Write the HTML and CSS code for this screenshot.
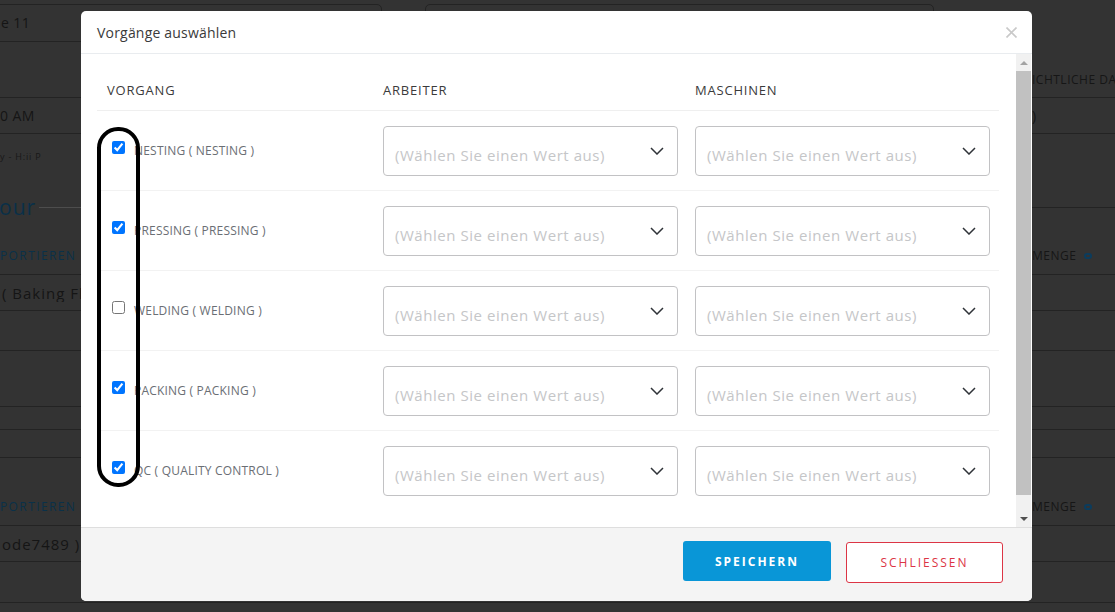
FILE: index.html
```html
<!DOCTYPE html>
<html lang="de">
<head>
<meta charset="utf-8">
<title>Vorgänge auswählen</title>
<link rel="stylesheet" href="styles.css">
</head>
<body>
<div class="page">
  <div class="bg">
    <div class="bg-fields">
      <div class="field field-a"><span class="txt">e 11</span></div>
      <div class="field field-b"></div>
    </div>
    <div class="bg-row r3 bottom"><span class="l"></span><span class="r cap">ICHTLICHE DAU</span></div>
    <div class="bg-row r4 mid"><span class="l txt">0 AM</span><span class="r txt">)</span></div>
    <div class="bg-row r5 noline"><span class="l small">y - H:ii P</span></div>
    <div class="bg-head"><span class="legend">our</span><span class="rule-light"></span><span class="rule"></span></div>
    <div class="bg-row r6 bottom"><span class="l cap blue">PORTIEREN A</span><span class="r cap">MENGE <i class="eye"></i></span></div>
    <div class="bg-row r7 mid"><span class="l txt wide">( Baking Fl</span><span class="r"></span></div>
    <div class="bg-row r8"></div>
    <div class="bg-row r9"></div>
    <div class="bg-row r10"></div>
    <div class="bg-row r11"></div>
    <div class="bg-row r12 bottom"><span class="l cap blue">PORTIEREN A</span><span class="r cap">MENGE <i class="eye"></i></span></div>
    <div class="bg-row r13 mid"><span class="l txt wide">ode7489 )</span><span class="r"></span></div>
    <div class="bg-row r14"></div>
  </div>

  <div class="modal">
    <div class="m-header">
      <span class="m-title">Vorgänge auswählen</span>
      <svg class="m-close" width="11" height="11" viewBox="0 0 11 11"><path d="M0.5 0.5 L10.5 10.5 M10.5 0.5 L0.5 10.5" stroke="#c9c9c9" stroke-width="1.6" fill="none"/></svg>
    </div>
    <div class="m-body">
      <div class="m-content">
        <div class="t-head">
          <div class="c1">Vorgang</div>
          <div class="c2">Arbeiter</div>
          <div class="c3">Maschinen</div>
        </div>

        <div class="t-row">
          <div class="c1"><input type="checkbox" checked><span class="op">Nesting ( Nesting )</span></div>
          <div class="c2"><div class="select"><span class="ph">(Wählen Sie einen Wert aus)</span><svg class="chev" width="14" height="8" viewBox="0 0 14 8"><path d="M1 1 L7 7 L13 1" stroke="#2f3338" stroke-width="1.5" fill="none"/></svg></div></div>
          <div class="c3"><div class="select"><span class="ph">(Wählen Sie einen Wert aus)</span><svg class="chev" width="14" height="8" viewBox="0 0 14 8"><path d="M1 1 L7 7 L13 1" stroke="#2f3338" stroke-width="1.5" fill="none"/></svg></div></div>
        </div>

        <div class="t-row">
          <div class="c1"><input type="checkbox" checked><span class="op">Pressing ( Pressing )</span></div>
          <div class="c2"><div class="select"><span class="ph">(Wählen Sie einen Wert aus)</span><svg class="chev" width="14" height="8" viewBox="0 0 14 8"><path d="M1 1 L7 7 L13 1" stroke="#2f3338" stroke-width="1.5" fill="none"/></svg></div></div>
          <div class="c3"><div class="select"><span class="ph">(Wählen Sie einen Wert aus)</span><svg class="chev" width="14" height="8" viewBox="0 0 14 8"><path d="M1 1 L7 7 L13 1" stroke="#2f3338" stroke-width="1.5" fill="none"/></svg></div></div>
        </div>

        <div class="t-row">
          <div class="c1"><input type="checkbox"><span class="op">Welding ( Welding )</span></div>
          <div class="c2"><div class="select"><span class="ph">(Wählen Sie einen Wert aus)</span><svg class="chev" width="14" height="8" viewBox="0 0 14 8"><path d="M1 1 L7 7 L13 1" stroke="#2f3338" stroke-width="1.5" fill="none"/></svg></div></div>
          <div class="c3"><div class="select"><span class="ph">(Wählen Sie einen Wert aus)</span><svg class="chev" width="14" height="8" viewBox="0 0 14 8"><path d="M1 1 L7 7 L13 1" stroke="#2f3338" stroke-width="1.5" fill="none"/></svg></div></div>
        </div>

        <div class="t-row">
          <div class="c1"><input type="checkbox" checked><span class="op">Packing ( Packing )</span></div>
          <div class="c2"><div class="select"><span class="ph">(Wählen Sie einen Wert aus)</span><svg class="chev" width="14" height="8" viewBox="0 0 14 8"><path d="M1 1 L7 7 L13 1" stroke="#2f3338" stroke-width="1.5" fill="none"/></svg></div></div>
          <div class="c3"><div class="select"><span class="ph">(Wählen Sie einen Wert aus)</span><svg class="chev" width="14" height="8" viewBox="0 0 14 8"><path d="M1 1 L7 7 L13 1" stroke="#2f3338" stroke-width="1.5" fill="none"/></svg></div></div>
        </div>

        <div class="t-row last">
          <div class="c1"><input type="checkbox" checked><span class="op">QC ( Quality Control )</span></div>
          <div class="c2"><div class="select"><span class="ph">(Wählen Sie einen Wert aus)</span><svg class="chev" width="14" height="8" viewBox="0 0 14 8"><path d="M1 1 L7 7 L13 1" stroke="#2f3338" stroke-width="1.5" fill="none"/></svg></div></div>
          <div class="c3"><div class="select"><span class="ph">(Wählen Sie einen Wert aus)</span><svg class="chev" width="14" height="8" viewBox="0 0 14 8"><path d="M1 1 L7 7 L13 1" stroke="#2f3338" stroke-width="1.5" fill="none"/></svg></div></div>
        </div>
      </div>
      <div class="scrollbar">
        <div class="sb-btn"><svg width="8" height="4" viewBox="0 0 8 4"><path d="M0 4 L4 0 L8 4 Z" fill="#a3a3a3"/></svg></div>
        <div class="sb-thumb"></div>
        <div class="sb-track"></div>
        <div class="sb-btn"><svg width="8" height="4" viewBox="0 0 8 4"><path d="M0 0 L8 0 L4 4 Z" fill="#505050"/></svg></div>
      </div>
    </div>
    <div class="m-footer">
      <button class="btn btn-save">SPEICHERN</button>
      <button class="btn btn-close">SCHLIESSEN</button>
    </div>
    <div class="highlight"></div>
  </div>
</div>
</body>
</html>
```

FILE: styles.css
```css
* { box-sizing: border-box; }

html, body {
  margin: 0;
  padding: 0;
}

body {
  font-family: "Open Sans", "Noto Sans", sans-serif;
  background: #333;
}

.page {
  position: relative;
  width: 1115px;
  height: 612px;
  overflow: hidden;
  background: #333333;
}

/* ---------- dimmed background page ---------- */
.bg {
  display: flex;
  flex-direction: column;
}

.bg-fields {
  height: 42px;
  padding-top: 4px;
  display: flex;
}
.field {
  height: 38px;
  border: 1px solid #232323;
  border-radius: 5px;
}
.field-a {
  width: 387px;
  margin-left: -5px;
  padding-left: 5px;
  display: flex;
  align-items: center;
}
.field-b {
  width: 509px;
  margin-left: 43px;
}

.bg-row {
  display: flex;
  justify-content: space-between;
  align-items: center;
  border-bottom: 1px solid #232323;
  white-space: nowrap;
  overflow: hidden;
}

.bg-row.noline { border-bottom: none; align-items: flex-start; }
.bg-row.bottom { align-items: flex-end; }

.bg-row .l {
  width: 81px;
  overflow: hidden;
  white-space: nowrap;
  display: block;
}
.bg-row .r {
  width: 83px;
  overflow: hidden;
  white-space: nowrap;
  display: flex;
  align-items: center;
}

.r3 { height: 56px; padding-bottom: 9px; }
.r4 { height: 36px; }
.r5 { height: 61px; padding-top: 17px; }
.r6 { height: 55px; padding-bottom: 10px; }
.r7 { height: 36px; }
.r8 { height: 40px; }
.r9 { height: 56px; }
.r10 { height: 23px; }
.r11 { height: 28px; }
.r12 { height: 68px; padding-bottom: 10px; }
.r13 { height: 36px; }
.r14 { height: 41px; }

.txt {
  font-size: 14px;
  line-height: 18px;
  color: #151515;
  letter-spacing: 0.4px;
}
.txt.wide { font-size: 15px; letter-spacing: 1px; padding-left: 2px; }

.cap {
  font-size: 12px;
  line-height: 16px;
  letter-spacing: 0.5px;
  color: #161616;
  text-transform: uppercase;
}
.cap.blue { color: #0a3149; letter-spacing: 1.4px; }

.small {
  font-size: 9px;
  line-height: 12px;
  letter-spacing: 0.8px;
  color: #181818;
}

.eye {
  display: inline-block;
  width: 8px;
  height: 6px;
  border: 2px solid #0b3c5d;
  border-radius: 4px;
  margin-left: 8px;
}

.bg-head {
  height: 25px;
  display: flex;
  align-items: center;
}
.legend {
  font-size: 21px;
  line-height: 25px;
  letter-spacing: 1px;
  color: #0a3048;
  margin-left: -1px;
  padding-right: 3px;
}
.rule-light {
  width: 350px;
  height: 1px;
  background: #4d4d4d;
}
.rule {
  flex: 1;
  height: 1px;
  background: #232323;
}

/* ---------- modal ---------- */
.modal {
  position: absolute;
  left: 81px;
  top: 11px;
  width: 951px;
  height: 590px;
  background: #fff;
  border-radius: 5px;
  overflow: hidden;
  display: flex;
  flex-direction: column;
}

.m-header {
  height: 43px;
  flex: none;
  display: flex;
  align-items: center;
  justify-content: space-between;
  padding: 0 15px 0 16px;
  border-bottom: 1px solid #e9ecef;
}
.m-title {
  font-size: 14px;
  color: #3a3a3a;
  letter-spacing: 0.2px;
}
.m-close { display: block; }

.m-body {
  height: 473px;
  flex: none;
  display: flex;
  overflow: hidden;
}

.m-content {
  flex: 1;
  padding: 16px 17px 0 16px;
  overflow: hidden;
}

.t-head,
.t-row {
  display: grid;
  grid-template-columns: 286px 312px 1fr;
}

.t-head {
  height: 41px;
  border-bottom: 1px solid #efefef;
  align-items: center;
  font-size: 13px;
  letter-spacing: 0.8px;
  text-transform: uppercase;
  color: #3b3b3b;
}
.t-head .c1 { padding-left: 10px; }

.t-row {
  height: 80px;
  border-bottom: 1px solid #f2f2f2;
  align-items: center;
}
.t-row.last { border-bottom-color: transparent; }

.t-row .c1 {
  display: flex;
  align-items: center;
}
.t-row input[type="checkbox"] {
  width: 13px;
  height: 13px;
  margin: 0 9px 6px 15px;
  flex: none;
}
.op {
  font-size: 12px;
  letter-spacing: 0.2px;
  text-transform: uppercase;
  color: #6a6e74;
}

.select {
  width: 295px;
  height: 50px;
  border: 1px solid #c2c2c4;
  border-radius: 4px;
  display: flex;
  align-items: center;
  justify-content: space-between;
  padding: 0 13px 0 11px;
}
.ph {
  font-size: 15px;
  line-height: 20px;
  letter-spacing: 0.55px;
  color: #c5c6c8;
  padding-top: 9px;
}
.chev {
  display: block;
  margin-top: 1px;
}

/* fake scrollbar */
.scrollbar {
  width: 15px;
  flex: none;
  background: #f1f1f1;
  display: flex;
  flex-direction: column;
  margin-right: 1px;
}
.sb-btn {
  height: 17px;
  display: flex;
  align-items: center;
  justify-content: center;
  flex: none;
}
.sb-thumb {
  height: 424px;
  background: #c1c1c1;
  flex: none;
}
.sb-track { flex: 1; }

/* footer */
.m-footer {
  flex: 1;
  background: #f4f4f4;
  border-top: 1px solid #dedede;
  display: flex;
  justify-content: flex-end;
  align-items: flex-start;
  gap: 15px;
  padding: 13px 29px 0 0;
}

.btn {
  font-family: "Open Sans", "Noto Sans", sans-serif;
  font-size: 12px;
  letter-spacing: 2px;
  border-radius: 3px;
  cursor: pointer;
}
.btn-save {
  width: 148px;
  height: 40px;
  background: #0996d7;
  color: #fff;
  font-weight: 700;
  border: none;
}
.btn-close {
  width: 157px;
  height: 41px;
  margin-top: 1px;
  background: #fff;
  color: #dc3545;
  border: 1px solid #dc3545;
}

/* annotation drawn over the checkbox column */
.highlight {
  position: absolute;
  left: 16px;
  top: 116px;
  width: 43px;
  height: 360px;
  border: 4px solid #000;
  border-radius: 21px;
  pointer-events: none;
}
```
